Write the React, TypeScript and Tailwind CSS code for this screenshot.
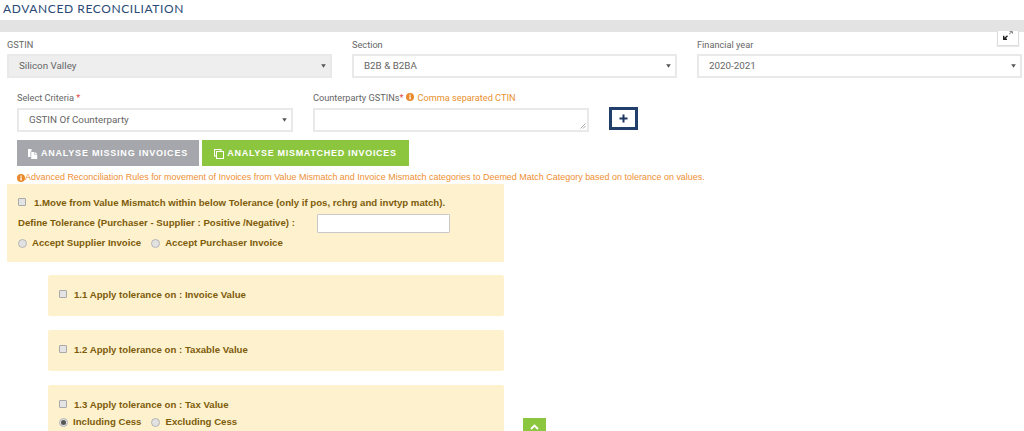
import React from "react";

const sans = "font-['Roboto','Liberation_Sans',sans-serif]";
const arial = "font-['Liberation_Sans',Arial,sans-serif]";

function Select({ value, className, gray }: { value: string; className: string; gray?: boolean }) {
  return (
    <div className={`flex items-center border-2 border-[#e9e9e9] text-[9.8px] text-[#666] ${gray ? "bg-[#eeeeee]" : "bg-white"} ${className}`}>
      <span className="flex-1">{value}</span>
      <svg width="5" height="4" viewBox="0 0 5 4">
        <path d="M0.2 0.3h4.6L2.5 3.8z" fill="#555" />
      </svg>
    </div>
  );
}

function Info({ size = 9 }: { size?: number }) {
  return (
    <svg width={size} height={size} viewBox="0 0 10 10" className="shrink-0">
      <circle cx="5" cy="5" r="5" fill="#e8892b" />
      <rect x="4.2" y="4.2" width="1.7" height="3.8" fill="#fff" />
      <rect x="4.2" y="2" width="1.7" height="1.5" fill="#fff" />
    </svg>
  );
}

function Check() {
  return <span className="inline-block h-[8px] w-[8px] rounded-[1px] border border-[#a9a9a9] bg-[#e4e4e4]" />;
}

function Radio({ on }: { on?: boolean }) {
  return (
    <span className="flex h-[9px] w-[9px] items-center justify-center rounded-full border border-[#b5b5b5] bg-[#e2e2e2]">
      {on && <span className="h-[5px] w-[5px] rounded-full bg-[#555]" />}
    </span>
  );
}

function SubPanel({ label, className, children }: { label: string; className: string; children?: React.ReactNode }) {
  return (
    <div className={`ml-[48px] w-[456px] rounded-[2px] bg-[#fef1cd] pl-[11px] ${className}`}>
      <div className="flex items-center">
        <span className="-mt-[3px] flex"><Check /></span>
        <span className="ml-[7px]">{label}</span>
      </div>
      {children}
    </div>
  );
}

export default function App() {
  return (
    <div className={`relative h-[431px] w-[1024px] overflow-hidden bg-white ${sans}`}>
      <div className="h-[20px] pl-[3px] pt-[1px] text-[12px] leading-[15px] tracking-[0.6px] text-[#2a4a75] font-['Lato',sans-serif]">
        ADVANCED RECONCILIATION
      </div>
      <div className="h-[12px] bg-[#e3e3e3]" />

      <div className="relative">
        <button className="absolute right-[5px] -top-[1px] flex h-[15px] w-[22px] items-start justify-center border border-t-0 border-[#dcdcdc] bg-white shadow-[0_1px_1px_rgba(0,0,0,0.08)]">
          <svg width="10" height="9" viewBox="0 0 10 9">
            <path d="M1 8 L4.5 4.8 M0.7 4.8V8.2H4" stroke="#222" strokeWidth="1.4" fill="none" />
            <path d="M6 3.2 L9 0.8 M6.5 0.6H9.5V2.6" stroke="#666" strokeWidth="0.8" fill="none" />
          </svg>
        </button>

        <div className="flex gap-[20px] pl-[7px] pt-[7px]">
          {[
            { label: "GSTIN", value: "Silicon Valley", gray: true },
            { label: "Section", value: "B2B & B2BA" },
            { label: "Financial year", value: "2020-2021" },
          ].map((f) => (
            <div key={f.label} className="w-[325px]">
              <div className="h-[15px] text-[9.2px] leading-[12px] text-[#666]">{f.label}</div>
              <Select value={f.value} gray={f.gray} className="h-[24px] pl-[10px] pr-[4px]" />
            </div>
          ))}
        </div>

        <div className="flex pl-[17px] pt-[14px]">
          <div className="w-[276px]">
            <div className="h-[16px] text-[9.2px] leading-[12px] text-[#666]">
              Select Criteria <span className="text-[#e04b4b]">*</span>
            </div>
            <Select value="GSTIN Of Counterparty" className="h-[24px] pl-[10px] pr-[4px]" />
          </div>
          <div className="relative ml-[20px] w-[276px]">
            <div className="flex h-[16px] items-start gap-[3px] text-[9.2px] leading-[12px] text-[#666]">
              <span>Counterparty GSTINs<span className="text-[#e04b4b]">*</span></span>
              <span className="mt-[1px]"><Info size={8} /></span>
              <span className="text-[#e8912d]">Comma separated CTIN</span>
            </div>
            <textarea className="block h-[24px] w-full resize-none border-2 border-[#e9e9e9] bg-white" />
            <svg width="6" height="6" viewBox="0 0 6 6" className="absolute bottom-[3px] right-[3px]">
              <path d="M0.5 5.5L5.5 0.5M3 5.5L5.5 3" stroke="#999" strokeWidth="0.8" />
            </svg>
          </div>
          <button className="ml-[20px] mt-[15px] flex h-[23px] w-[29px] items-center justify-center border-[3px] border-[#223f6b] bg-white">
            <svg width="9" height="9" viewBox="0 0 9 9">
              <path d="M4.5 0.5v8M0.5 4.5h8" stroke="#1d3560" strokeWidth="2" />
            </svg>
          </button>
        </div>

        <div className="flex gap-[3px] pl-[17px] pt-[8px]">
          <button className={`flex h-[26px] w-[182px] items-center justify-center gap-[3px] bg-[#a5a7ac] pt-[1px] text-[9px] font-bold tracking-[0.78px] text-white ${arial}`}>
            <svg width="10" height="10" viewBox="0 0 10 10">
              <path d="M0 0h3.5v2.5H2.5V8H0z" fill="#fff" />
              <path d="M3.2 3h3v2.5h3V10H3.2zM6.8 3L9.4 5H6.8z" fill="#fff" />
            </svg>
            ANALYSE MISSING INVOICES
          </button>
          <button className={`flex h-[26px] w-[207px] items-center justify-center gap-[3px] bg-[#8cc63f] pt-[1px] text-[9px] font-bold tracking-[0.7px] text-white ${arial}`}>
            <svg width="10" height="10" viewBox="0 0 10 10" fill="none" stroke="#fff" strokeWidth="1">
              <rect x="0.5" y="0.5" width="6.5" height="6.5" />
              <rect x="2.5" y="2.5" width="7" height="7" fill="#8cc63f" />
            </svg>
            ANALYSE MISMATCHED INVOICES
          </button>
        </div>

        <div className={`flex h-[18px] items-center pl-[17px] pt-[6px] text-[8.97px] text-[#ee8f33] ${arial}`}>
          <Info size={8} />
          <span>Advanced Reconciliation Rules for movement of Invoices from Value Mismatch and Invoice Mismatch categories to Deemed Match Category based on tolerance on values.</span>
        </div>

        <div className={`text-[9.65px] font-bold text-[#7d5c0c] ${arial}`}>
          <div className="ml-[7px] h-[78px] w-[497px] bg-[#fef1cd] pl-[11px] pt-[13px]">
            <div className="flex h-[12px] items-center">
              <span className="-mt-[2px] flex"><Check /></span>
              <span className="ml-[8px]">1.Move from Value Mismatch within below Tolerance (only if pos, rchrg and invtyp match).</span>
            </div>
            <div className="mt-[5px] flex h-[18px] items-center">
              <span>Define Tolerance (Purchaser - Supplier : Positive /Negative) :</span>
              <input className="ml-[22px] h-[19px] w-[133px] rounded-[1px] border border-[#c9c9c9] bg-white" />
            </div>
            <div className="mt-[4px] flex h-[14px] items-center">
              <Radio />
              <span className="ml-[5px]">Accept Supplier Invoice</span>
              <span className="ml-[10px]"><Radio /></span>
              <span className="ml-[5px]">Accept Purchaser Invoice</span>
            </div>
          </div>

          <SubPanel label="1.1 Apply tolerance on : Invoice Value" className="mt-[13px] h-[41px] pt-[13px]" />
          <SubPanel label="1.2 Apply tolerance on : Taxable Value" className="mt-[14px] h-[41px] pt-[13px]" />
          <SubPanel label="1.3 Apply tolerance on : Tax Value" className="mt-[14px] h-[60px] pt-[13px]">
            <div className="mt-[4px] flex h-[12px] items-center">
              <Radio on />
              <span className="ml-[5px]">Including Cess</span>
              <span className="ml-[10px]"><Radio /></span>
              <span className="ml-[5px]">Excluding Cess</span>
            </div>
          </SubPanel>
        </div>
      </div>

      <button className="absolute left-[523px] top-[418px] flex h-[20px] w-[23px] items-start justify-center bg-[#8cc63f] pt-[6px]">
        <svg width="9" height="6" viewBox="0 0 9 6">
          <path d="M1 5L4.5 1.5L8 5" stroke="#fff" strokeWidth="1.8" fill="none" />
        </svg>
      </button>
    </div>
  );
}
